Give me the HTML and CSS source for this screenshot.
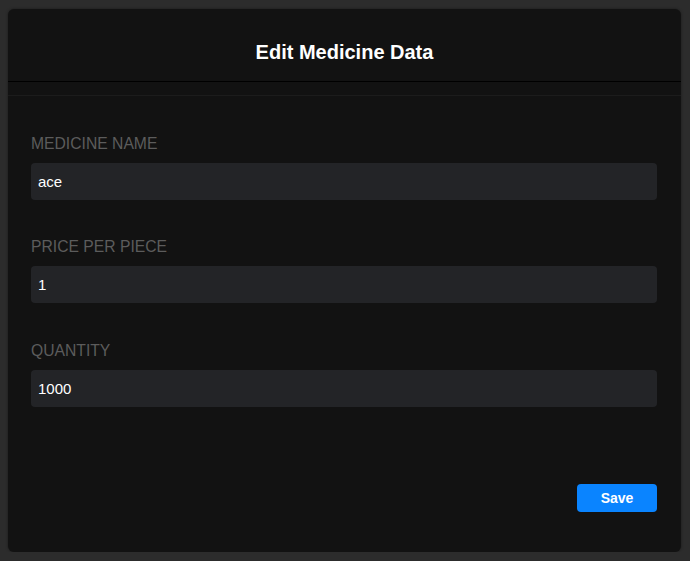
FILE: index.html
```html
<!DOCTYPE html>
<html>
<head>
<meta charset="utf-8">
<link rel="stylesheet" href="styles.css">
</head>
<body>
<div class="modal">
  <div class="modal-header">
    <h2 class="modal-title">Edit Medicine Data</h2>
  </div>
  <div class="divider"></div>
  <form class="modal-body">
    <div class="field">
      <label class="field-label">MEDICINE NAME</label>
      <input class="field-input" type="text" value="ace">
    </div>
    <div class="field">
      <label class="field-label">PRICE PER PIECE</label>
      <input class="field-input" type="text" value="1">
    </div>
    <div class="field">
      <label class="field-label">QUANTITY</label>
      <input class="field-input" type="text" value="1000">
    </div>
  </form>
  <div class="modal-footer">
    <button class="btn-save" type="button">Save</button>
  </div>
</div>
</body>
</html>
```

FILE: styles.css
```css
html, body {
  margin: 0;
  padding: 0;
  background: #2c2c2c;
  font-family: "Liberation Sans", Arial, sans-serif;
}

.modal {
  margin: 9px 0 0 8px;
  width: 673px;
  height: 543px;
  background: #121212;
  border-radius: 6px;
  box-shadow: 0 0 3px rgba(0, 0, 0, 0.45);
  display: flex;
  flex-direction: column;
  box-sizing: border-box;
}

.modal-header {
  height: 73px;
  box-sizing: border-box;
  border-bottom: 1px solid #000;
  padding-top: 32px;
}

.modal-title {
  margin: 0;
  text-align: center;
  color: #ffffff;
  font-size: 20px;
  font-weight: bold;
  line-height: 23px;
}

.divider {
  margin-top: 13px;
  height: 1px;
  background: #1c1c1c;
}

.modal-body {
  margin: 0;
  padding: 39px 24px 0 23px;
  display: flex;
  flex-direction: column;
  gap: 38px;
}

.field {
  display: flex;
  flex-direction: column;
}

.field:last-child {
  margin-top: 1px;
}

.field-label {
  color: #5c5c5c;
  font-size: 15.7px;
  line-height: 18px;
  margin-bottom: 10px;
}

.field-input {
  height: 37px;
  box-sizing: border-box;
  background: #232427;
  border: none;
  border-radius: 4px;
  padding: 0 7px;
  color: #ffffff;
  font-family: "Liberation Sans", Arial, sans-serif;
  font-size: 15px;
  outline: none;
}

.modal-footer {
  margin-top: auto;
  padding: 0 24px 40px 0;
  display: flex;
  justify-content: flex-end;
}

.btn-save {
  width: 80px;
  height: 28px;
  background: #0a84ff;
  border: none;
  border-radius: 4px;
  color: #ffffff;
  font-family: "Liberation Sans", Arial, sans-serif;
  font-size: 14px;
  font-weight: bold;
  padding: 0;
}
```
